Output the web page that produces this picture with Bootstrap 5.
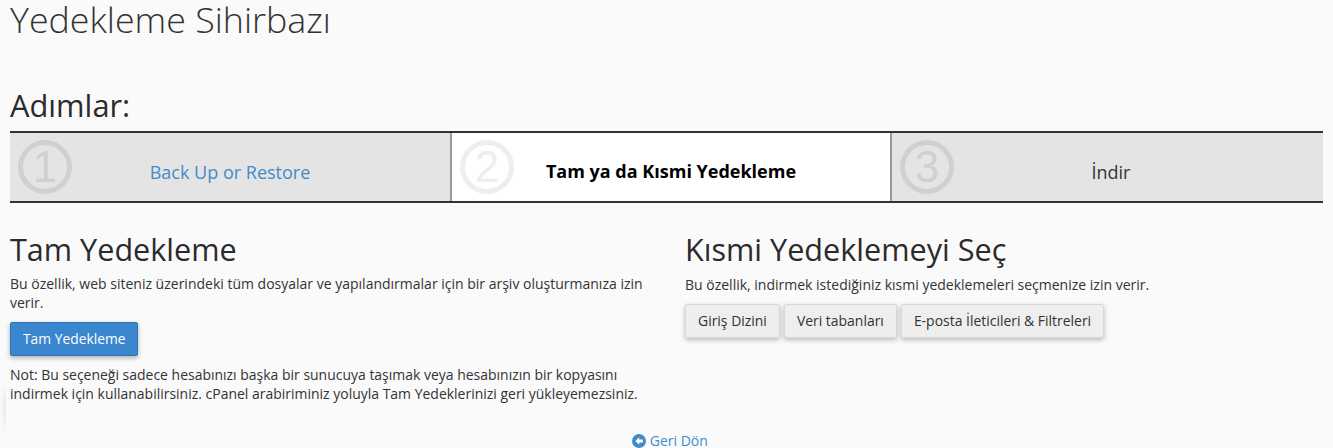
<!DOCTYPE html>
<html lang="tr">
<head>
<meta charset="utf-8">
<title>Yedekleme Sihirbazı</title>
<link href="https://cdn.jsdelivr.net/npm/bootstrap@5.3.0/dist/css/bootstrap.min.css" rel="stylesheet">
<style>
html,body{height:448px;overflow:hidden}
body{background:#fafafa;color:#333;font-family:"Open Sans","Noto Sans",sans-serif;font-size:14px;line-height:19px}
.page-wrap{padding:0 10px;position:relative}
.wiz-title{font-size:35.8px;font-weight:300;line-height:40px;margin:-1px 0 0;color:#333}
.wiz-sub{font-size:30.8px;font-weight:400;line-height:31px;margin:51px 0 10px;color:#2b2b2b}
.step-strip{display:flex;border-top:2px solid #333;border-bottom:2px solid #333;height:72px;overflow:hidden}
.step-cell{flex:0 0 440px;position:relative;background:#e4e4e4;display:flex;align-items:center;justify-content:center;font-size:18px;padding-top:10px;border-left:2px solid #999}
.step-cell:first-child{border-left:0}
.step-cell.current{background:#fff;color:#000;font-weight:700;padding-top:8px}
.step-cell a{color:#428bca;text-decoration:none}
.step-num{position:absolute;left:8px;top:7px;width:54px;height:54px;border:5px solid #d0d0d0;border-radius:50%;display:flex;align-items:center;justify-content:center;font-family:"Liberation Sans",sans-serif;font-weight:400;font-size:44px;color:#d0d0d0;line-height:1}
.current .step-num{border-color:#eee;color:#eee}
.opt-row{--bs-gutter-x:20px;margin-top:29px}
.opt-head{font-size:30.6px;font-weight:400;line-height:34px;margin:0 0 8px;color:#2b2b2b}
.opt-text{margin:0 0 10px}
.opt-right{padding-left:18.5px}
.opt-right .opt-head{margin-bottom:9px}
.opt-right .opt-text{margin-bottom:10px}
.btn-main{background:#3a87cf;border:1px solid #2f75b8;color:#fff;font-size:13.85px;line-height:20px;padding:6px 11px 6px 12px;border-radius:2px;box-shadow:0 2px 5px rgba(0,0,0,.3)}
.btn-alt{background:#eee;border:1px solid #d8d8d8;color:#333;font-size:13.95px;line-height:20px;padding:6px 12px;border-radius:2px;box-shadow:0 2px 5px rgba(0,0,0,.25)}
.note-text{margin:9px 0 0;font-size:13.97px}
.back-wrap{position:absolute;left:0;right:0;top:432px;text-align:center;padding-left:7px;line-height:20px}
.back-wrap a{color:#428bca;text-decoration:none}
.back-wrap svg{vertical-align:-2px}
.edge-shade{position:absolute;left:0;top:386px;width:6px;height:48px;background:linear-gradient(90deg,#fafafa,#e9e9e9);-webkit-mask-image:linear-gradient(180deg,transparent,#000 30%,#000 60%,transparent);mask-image:linear-gradient(180deg,transparent,#000 30%,#000 60%,transparent)}
</style>
</head>
<body>
<div class="page-wrap">
  <h1 class="wiz-title">Yedekleme Sihirbazı</h1>
  <h2 class="wiz-sub">Adımlar:</h2>
  <div class="step-strip">
    <div class="step-cell"><span class="step-num">1</span><a href="#">Back Up or Restore</a></div>
    <div class="step-cell current"><span class="step-num">2</span><span>Tam ya da Kısmi Yedekleme</span></div>
    <div class="step-cell"><span class="step-num">3</span><span>İndir</span></div>
  </div>
  <div class="row opt-row">
    <div class="col-6">
      <h2 class="opt-head">Tam Yedekleme</h2>
      <p class="opt-text">Bu özellik, web siteniz üzerindeki tüm dosyalar ve yapılandırmalar için bir arşiv oluşturmanıza izin verir.</p>
      <button type="button" class="btn btn-main">Tam Yedekleme</button>
      <p class="note-text">Not: Bu seçeneği sadece hesabınızı başka bir sunucuya taşımak veya hesabınızın bir kopyasını indirmek için kullanabilirsiniz. cPanel arabiriminiz yoluyla Tam Yedeklerinizi geri yükleyemezsiniz.</p>
    </div>
    <div class="col-6 opt-right">
      <h2 class="opt-head">Kısmi Yedeklemeyi Seç</h2>
      <p class="opt-text">Bu özellik, indirmek istediğiniz kısmi yedeklemeleri seçmenize izin verir.</p>
      <div class="d-flex gap-1">
        <button type="button" class="btn btn-alt">Giriş Dizini</button>
        <button type="button" class="btn btn-alt">Veri tabanları</button>
        <button type="button" class="btn btn-alt">E-posta İleticileri &amp; Filtreleri</button>
      </div>
    </div>
  </div>
  <div class="edge-shade"></div>
  <div class="back-wrap"><a href="#"><svg width="14" height="14" viewBox="0 0 14 14"><circle cx="7" cy="7" r="7" fill="#428bca"/><path d="M7.2 3.2 3.4 7l3.8 3.8V8.6h3.6V5.4H7.2z" fill="#fff"/></svg> Geri Dön</a></div>
</div>
<script src="https://cdn.jsdelivr.net/npm/bootstrap@5.3.0/dist/js/bootstrap.bundle.min.js"></script>
</body>
</html>
